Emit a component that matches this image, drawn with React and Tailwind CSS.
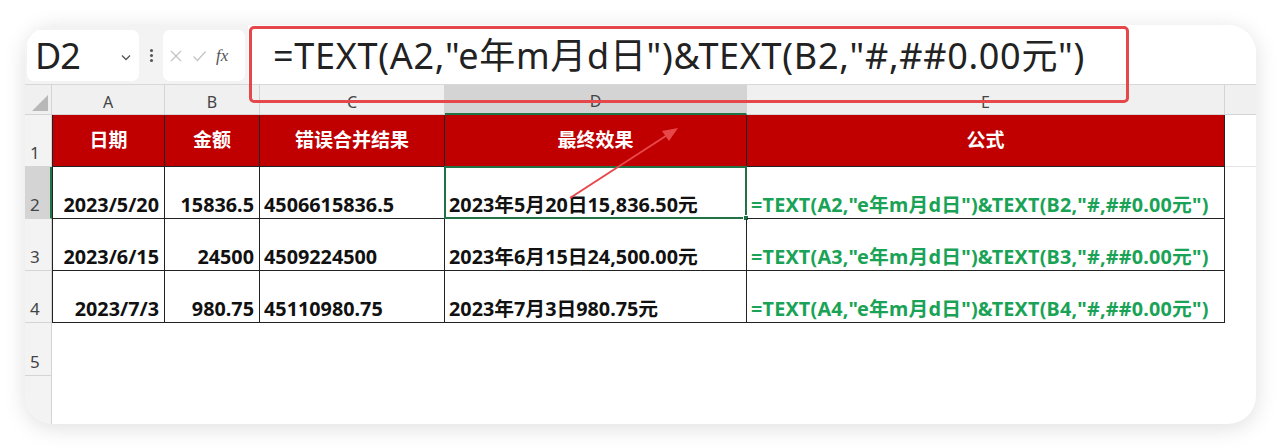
import React from "react";

const FONT = { fontFamily: '"Noto Sans", "Noto Sans CJK SC", sans-serif' };

const cols = [
  { key: "A", w: "w-[113px]" },
  { key: "B", w: "w-[95px]" },
  { key: "C", w: "w-[185px]" },
  { key: "D", w: "w-[302px]" },
  { key: "E", w: "w-[478px]" },
];

const heads = ["日期", "金额", "错误合并结果", "最终效果", "公式"];

const rows = [
  ["2023/5/20", "15836.5", "4506615836.5", "2023年5月20日15,836.50元", '=TEXT(A2,"e年m月d日")&TEXT(B2,"#,##0.00元")'],
  ["2023/6/15", "24500", "4509224500", "2023年6月15日24,500.00元", '=TEXT(A3,"e年m月d日")&TEXT(B3,"#,##0.00元")'],
  ["2023/7/3", "980.75", "45110980.75", "2023年7月3日980.75元", '=TEXT(A4,"e年m月d日")&TEXT(B4,"#,##0.00元")'],
];

const RowNum = ({ n, active, h = "h-[52px]" }) => (
  <div
    className={`w-[27px] ${h} shrink-0 flex items-end pl-[5px] pb-[1px] text-[17px] text-[#444] border-b border-[#d4d4d4] ${
      active ? "bg-[#d4d4d4] border-r-2 border-r-[#217346]" : "bg-[#f3f3f3] border-r border-r-[#d4d4d4]"
    }`}
  >
    {n}
  </div>
);

export default function App() {
  return (
    <div className="relative w-[1280px] h-[448px] bg-white overflow-hidden" style={FONT}>
      {/* Sheet card */}
      <div className="ml-[25px] mt-[25px] w-[1231px] h-[399px] rounded-[28px] overflow-hidden bg-white shadow-[0_4px_22px_rgba(0,0,0,0.13)] flex flex-col">
        {/* Formula bar */}
        <div className="h-[60px] flex shrink-0 border-b border-[#d8d8d8]">
          <div className="w-[223px] bg-[#f3f3f3] flex items-center pl-[2px] pt-[2px]">
            <div className="w-[112px] h-[51px] bg-white rounded-[7px] flex items-center justify-between pl-[8px] pr-[7px]">
              <span className="text-[36px] leading-none text-[#222] tracking-[-1px]">D2</span>
              <svg width="12" height="12" viewBox="0 0 12 12" className="mt-[2px]">
                <path d="M2 4.5 L6 8.5 L10 4.5" fill="none" stroke="#555" strokeWidth="1.3" />
              </svg>
            </div>
            <div className="w-[24px] flex flex-col items-center gap-[2px]">
              <span className="w-[3px] h-[3px] rounded-full bg-[#555]" />
              <span className="w-[3px] h-[3px] rounded-full bg-[#555]" />
              <span className="w-[3px] h-[3px] rounded-full bg-[#555]" />
            </div>
            <div className="w-[82px] h-[51px] bg-white rounded-[7px] flex items-center pl-[6px] gap-[9px]">
              <svg width="14" height="14" viewBox="0 0 14 14">
                <path d="M2 2 L12 12 M12 2 L2 12" stroke="#c4c4c4" strokeWidth="1.3" />
              </svg>
              <svg width="15" height="14" viewBox="0 0 15 14">
                <path d="M1.5 7.5 L5.5 11.5 L13.5 2.5" fill="none" stroke="#c4c4c4" strokeWidth="1.3" />
              </svg>
              <span className="text-[17px] italic text-[#555] leading-none" style={{ fontFamily: '"Liberation Serif", serif' }}>
                fx
              </span>
            </div>
          </div>
          <div className="flex-1 bg-white flex items-center pl-[25px] pt-[2px]">
            <span className="text-[36px] text-[#222] leading-none tracking-[0.7px]">
              =TEXT(A2,"e年m月d日")&amp;TEXT(B2,"#,##0.00元")
            </span>
          </div>
        </div>

        {/* Column headers */}
        <div className="h-[30px] flex shrink-0 bg-[#f0f0f0]">
          <div className="w-[27px] shrink-0 border-r border-b border-[#d4d4d4] flex items-end justify-end p-[2px]">
            <svg width="18" height="18" viewBox="0 0 18 18">
              <path d="M17 1 L17 17 L1 17 Z" fill="#b8b8b8" />
            </svg>
          </div>
          {cols.map((c) => (
            <div
              key={c.key}
              className={`${c.w} shrink-0 flex items-end justify-center text-[16px] text-[#444] border-r border-[#d4d4d4] ${
                c.key === "D" ? "bg-[#d4d4d4] border-b-2 border-b-[#217346]" : "border-b border-b-[#d4d4d4]"
              }`}
            >
              {c.key}
            </div>
          ))}
          <div className="flex-1 border-b border-[#d4d4d4]" />
        </div>

        {/* Header row */}
        <div className="flex shrink-0">
          <RowNum n="1" />
          {heads.map((h, i) => (
            <div
              key={h}
              className={`${cols[i].w} shrink-0 h-[52px] bg-[#c00000] text-white font-bold text-[19px] flex items-center justify-center border-r border-b border-[#222] ${
                i === 0 ? "border-l" : ""
              }`}
            >
              {h}
            </div>
          ))}
          <div className="flex-1 border-b border-[#e4e4e4]" />
        </div>

        {/* Data rows */}
        {rows.map((r, ri) => (
          <div key={ri} className="flex shrink-0">
            <RowNum n={String(ri + 2)} active={ri === 0} />
            {r.map((v, ci) => {
              const right = ci < 2;
              const green = ci === 4;
              return (
                <div
                  key={ci}
                  className={`${cols[ci].w} shrink-0 h-[52px] relative flex items-end font-bold text-[19.8px] leading-[26px] border-r border-b border-[#222] whitespace-nowrap overflow-visible ${
                    right ? "justify-end pr-[5px]" : "pl-[4px]"
                  } ${green ? "text-[#1aa356] tracking-[0.2px]" : "text-[#111]"} ${ci === 0 ? "border-l" : ""}`}
                >
                  {v}
                  {ri === 0 && ci === 3 && (
                    <div className="absolute -left-[1px] -top-[1px] -right-[1px] -bottom-[1px] border-2 border-[#217346]">
                      <div className="absolute -right-[4px] -bottom-[4px] w-[6px] h-[6px] bg-[#217346] border border-white" />
                    </div>
                  )}
                </div>
              );
            })}
            <div className="flex-1" />
          </div>
        ))}

        {/* Empty rows */}
        <div className="flex shrink-0">
          <RowNum n="5" h="h-[53px]" />
          <div className="flex-1" />
        </div>
        <div className="flex flex-1">
          <div className="w-[27px] shrink-0 bg-[#f3f3f3] border-r border-[#d4d4d4]" />
          <div className="flex-1" />
        </div>
      </div>

      {/* Annotation: red box round the formula */}
      <div className="absolute left-[249px] top-[26px] w-[880px] h-[77px] border-[3px] border-[#e5484a] rounded-[5px]" />

      {/* Annotation: arrow */}
      <svg className="absolute left-0 top-0" width="1280" height="448">
        <line x1="570" y1="198" x2="672" y2="132" stroke="#e8474a" strokeWidth="2" />
        <path d="M678 128 L662 131 L669 141 Z" fill="#e8474a" />
      </svg>
    </div>
  );
}
